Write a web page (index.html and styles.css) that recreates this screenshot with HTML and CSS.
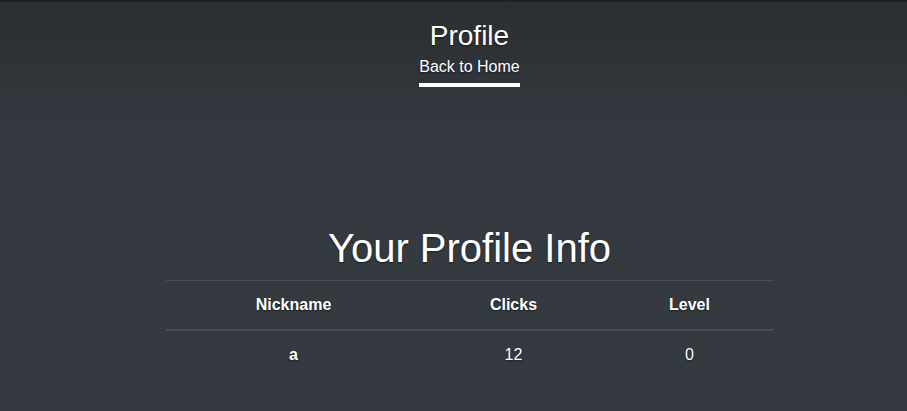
FILE: index.html
```html
<!DOCTYPE html>
<html lang="en">
<head>
    <meta charset="UTF-8">
    <title>Profile</title>
    <link rel="stylesheet" href="styles.css">
</head>
<body>
<div class="cover">
    <header class="masthead">
        <h3 class="brand">Profile</h3>
        <nav class="nav">
            <a class="nav-link active" href="#">Back to Home</a>
        </nav>
    </header>

    <main class="inner">
        <h1 class="title">Your Profile Info</h1>
        <table class="info">
            <thead>
                <tr>
                    <th class="c1">Nickname</th>
                    <th class="c2">Clicks</th>
                    <th class="c3">Level</th>
                </tr>
            </thead>
            <tbody>
                <tr>
                    <th>a</th>
                    <td>12</td>
                    <td>0</td>
                </tr>
            </tbody>
        </table>
    </main>
</div>
</body>
</html>
```

FILE: styles.css
```css
* {
    margin: 0;
    padding: 0;
    box-sizing: border-box;
}
html, body {
    height: 100%;
}
body {
    font-family: "Liberation Sans", Arial, sans-serif;
    font-size: 16px;
    line-height: 1.5;
    color: #fff;
    background: #343a40;
    background-image: linear-gradient(to bottom, #1c1f22 0, #1c1f22 1px, #2b2e32 2px, #343a40 140px, #343a40 100%);
    text-shadow: 0 1px 2px rgba(0, 0, 0, .5);
}
.cover {
    display: flex;
    flex-direction: column;
    align-items: center;
    padding-top: 21px;
    padding-left: 32px;
}
.masthead {
    display: flex;
    flex-direction: column;
    align-items: center;
}
.brand {
    font-size: 28px;
    font-weight: 500;
    line-height: 30px;
}
.nav {
    display: flex;
}
.nav-link {
    display: block;
    padding: 4px 0;
    color: #fff;
    text-decoration: none;
    border-bottom: 4px solid transparent;
}
.nav-link.active {
    border-bottom-color: #fff;
}
.inner {
    margin-top: 137px;
    display: flex;
    flex-direction: column;
    align-items: center;
}
.title {
    font-size: 40px;
    font-weight: 500;
    line-height: 1.2;
    margin-bottom: 8px;
}
.info {
    width: 608px;
    border-collapse: collapse;
    text-align: center;
}
.info th, .info td {
    padding: 12px;
    border-top: 1px solid #454d55;
    vertical-align: top;
}
.info thead th {
    border-bottom: 2px solid #454d55;
    font-weight: bold;
}
.info tbody tr:first-child th,
.info tbody tr:first-child td {
    border-top: 0;
}
.info .c1 { width: 256px; }
.info .c2 { width: 184px; }
.info .c3 { width: 168px; }
```
